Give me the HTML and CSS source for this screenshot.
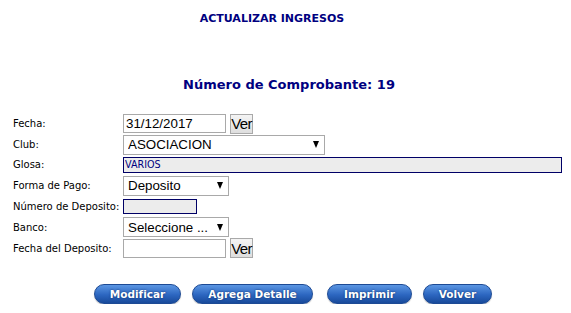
FILE: index.html
```html
<!DOCTYPE html>
<html lang="es">
<head>
    <meta charset="UTF-8">
    <meta name="viewport" content="width=device-width, initial-scale=1.0">
    <title>Actualizar Ingresos</title>
    <link rel="stylesheet" href="styles.css">
</head>
<body>
    <h1 class="titulo">ACTUALIZAR INGRESOS</h1>
    <h2 class="subtitulo">Número de Comprobante: 19</h2>

    <!-- Datos del ingreso -->
    <form class="form-ingreso">
        <div class="fila fila-fecha">
            <label for="fecha">Fecha:</label>
            <div class="campo">
                <input type="text" id="fecha" class="txt-fecha" value="31/12/2017">
                <button type="button" class="btn-ver">Ver</button>
            </div>
        </div>
        <div class="fila fila-club">
            <label for="club">Club:</label>
            <div class="campo">
                <span class="combo combo-club">
                    <select id="club"><option>ASOCIACION</option></select>
                </span>
            </div>
        </div>
        <div class="fila fila-glosa">
            <label for="glosa">Glosa:</label>
            <div class="campo">
                <input type="text" id="glosa" class="txt-gris txt-glosa" value="VARIOS">
            </div>
        </div>
        <div class="fila fila-forma">
            <label for="forma">Forma de Pago:</label>
            <div class="campo">
                <span class="combo combo-corto">
                    <select id="forma"><option>Deposito</option></select>
                </span>
            </div>
        </div>
        <div class="fila fila-numero">
            <label for="numero">Número de Deposito:</label>
            <div class="campo">
                <input type="text" id="numero" class="txt-gris txt-numero">
            </div>
        </div>
        <div class="fila fila-banco">
            <label for="banco">Banco:</label>
            <div class="campo">
                <span class="combo combo-corto">
                    <select id="banco"><option>Seleccione ...</option></select>
                </span>
            </div>
        </div>
        <div class="fila fila-fdep">
            <label for="fdeposito">Fecha del Deposito:</label>
            <div class="campo">
                <input type="text" id="fdeposito" class="txt-fecha">
                <button type="button" class="btn-ver">Ver</button>
            </div>
        </div>
    </form>

    <div class="botones">
        <button type="button" class="boton b-modificar">Modificar</button>
        <button type="button" class="boton b-detalle">Agrega Detalle</button>
        <button type="button" class="boton b-imprimir">Imprimir</button>
        <button type="button" class="boton b-volver">Volver</button>
    </div>
</body>
</html>
```

FILE: styles.css
```css
body {
    font-family: "DejaVu Sans", Verdana, sans-serif;
    margin: 0;
    padding: 0;
    background: #fff;
}

.titulo {
    margin: 0;
    padding: 12px 27px 0 0;
    height: 20px;
    text-align: center;
    font-size: 11px;
    color: #000080;
}

.subtitulo {
    margin: 0;
    padding: 45px 0 0 7px;
    height: 22px;
    text-align: center;
    font-size: 13px;
    color: #000080;
}

.form-ingreso {
    margin: 14px 0 0 0;
    padding-left: 13px;
}

.fila {
    display: flex;
    align-items: center;
}

.fila label {
    width: 110px;
    font-size: 10px;
    color: #000;
}

.campo {
    display: flex;
    align-items: center;
    gap: 4px;
}

.fila-fecha  { height: 21px; }
.fila-club   { height: 21px; }
.fila-glosa  { height: 19px; }
.fila-forma  { height: 23px; }
.fila-numero { height: 19px; }
.fila-banco  { height: 22px; }
.fila-fdep   { height: 20px; }

.txt-fecha {
    width: 103px;
    height: 19px;
    box-sizing: border-box;
    padding: 0 2px;
    border: 1px solid #a9a9a9;
    font-family: "Liberation Sans", Arial, sans-serif;
    font-size: 13.33px;
    color: #000;
}

.btn-ver {
    width: 23px;
    height: 20px;
    padding: 0;
    border: 1px solid #a9a9a9;
    background: linear-gradient(#f4f4f4, #dedede);
    font-family: "Liberation Sans", Arial, sans-serif;
    font-size: 15px;
    letter-spacing: -0.6px;
    color: #000;
}

.txt-gris {
    height: 16px;
    box-sizing: border-box;
    padding: 0 1px;
    border: 1px solid #000066;
    background: #ececec;
    font-family: "DejaVu Sans", Verdana, sans-serif;
    font-size: 9.6px;
    color: #000080;
}

.txt-glosa  { width: 439px; }
.txt-numero { width: 74px; height: 15px; }

.combo {
    position: relative;
    display: inline-block;
}

.combo select {
    appearance: none;
    -webkit-appearance: none;
    height: 20px;
    box-sizing: border-box;
    padding: 0 16px 0 4px;
    border: 1px solid #a9a9a9;
    border-radius: 0;
    background: #fff;
    font-family: "Liberation Sans", Arial, sans-serif;
    font-size: 13.33px;
    color: #000;
}

.combo::after {
    content: "";
    position: absolute;
    right: 6px;
    top: 7px;
    border-left: 3.5px solid transparent;
    border-right: 3.5px solid transparent;
    border-top: 7px solid #000;
    pointer-events: none;
}

.combo-club select  { width: 202px; }
.combo-corto select { width: 106px; }

.botones {
    display: flex;
    justify-content: center;
    gap: 11px;
    margin-top: 26px;
    padding-left: 15px;
}

.boton {
    height: 20px;
    padding: 0;
    border: 1px solid #1d4a94;
    border-radius: 10px;
    background: linear-gradient(#5b96e3, #2c66c0 55%, #184a9a);
    box-shadow: 0 1px 1px rgba(0, 0, 0, 0.25);
    font-family: "DejaVu Sans", Verdana, sans-serif;
    font-size: 10.5px;
    font-weight: bold;
    color: #fff;
    text-shadow: 0 0 2px #0b2b66;
}

.b-modificar { width: 87px; }
.b-detalle   { width: 121px; }
.b-imprimir  { width: 85px; margin-left: 3px; }
.b-volver    { width: 69px; }
```
